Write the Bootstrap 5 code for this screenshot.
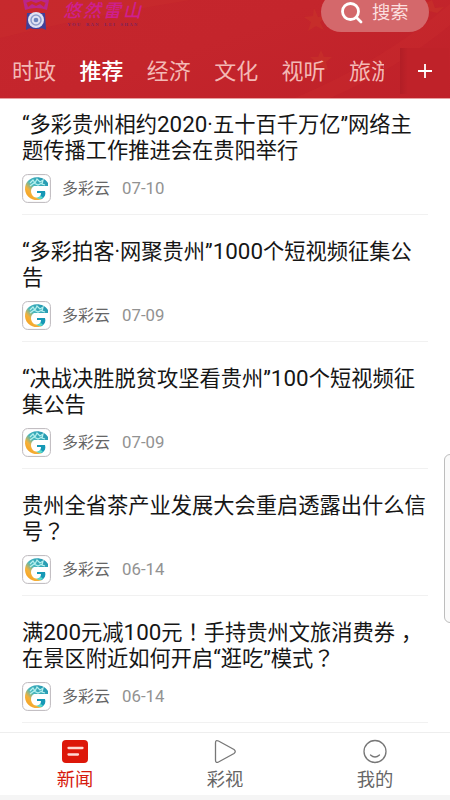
<!DOCTYPE html>
<html lang="zh-CN">
<head>
<meta charset="utf-8">
<meta name="viewport" content="width=device-width, initial-scale=1">
<title>多彩云新闻</title>
<link rel="stylesheet" href="https://cdn.jsdelivr.net/npm/bootstrap@5.3.0/dist/css/bootstrap.min.css">
<style>
body{font-family:Roboto,"Noto Sans CJK SC",sans-serif;color:#161616;width:450px;height:800px}
svg{display:block;flex:none}
.top-area{height:99px;background:linear-gradient(160deg,#c5262d 0%,#c4252c 45%,#bf2129 100%);border-bottom:1px solid #e8a0a0}
.header-art{left:0;top:0}
.brand-row{height:36px;padding-left:22px;padding-right:21px}
.brand-text{width:82px;margin-left:12px;color:#cf1f8e;text-align:center;white-space:nowrap}
.brand-name{font:italic 500 18px/18px "Noto Sans CJK SC",sans-serif;letter-spacing:2px;height:20px}
.brand-sub{font:700 4.5px/6px "Liberation Serif",serif;color:#7a2360;letter-spacing:1.35px;word-spacing:2px;margin-top:2px}
.search-pill{width:108px;height:40px;margin-top:-8px;background:#d4686b;color:#fbdfdf;font-size:18.3px;padding-left:20px;padding-top:1px;gap:9px}
.tab-row{height:62px;padding-left:12px;color:#f3b9b5;font-size:22px;line-height:32px;padding-top:19.5px}
.tab-list{width:372px;gap:23.4px;white-space:nowrap}
.tab-list span{flex:none;width:44px}
.tab-list .chosen{color:#fff;font-weight:500}
.add-tab{width:49px;height:46px;margin-top:-8px;margin-left:16px;background:linear-gradient(90deg,#b21e26,#bf2229 16%)}
.feed{height:633px;padding:0 22px}
.story{height:127px;border-bottom:1px solid #f1f1f1;padding-top:23.5px}
.story:first-child{height:116px;padding-top:12.5px}
.story h2{font-size:21.25px;line-height:26.5px;font-weight:400;white-space:nowrap;height:53px}
.story h2 span{line-height:1}
.num{font-size:22.4px}
.mid{font-family:"Noto Sans CJK TC",sans-serif}
.low-comma{margin-left:6px}
.meta{margin-top:9px;height:29px;font-size:16px;color:#666}
.meta span{position:relative;top:1px}
.meta time{position:relative;top:1px}
.meta .source{margin-left:11px}
.meta time{margin-left:12px;color:#929292;font-size:16.8px}
.bottom-tabs{height:63px;border-top:1px solid #eee;color:#666;font-size:18.3px;line-height:24px}
.bottom-tabs a{color:inherit;padding-top:6px}
.bottom-tabs a.now{color:#d61b0e}
.page-end{height:5px;background:#f5f5f5}
.edge-handle{left:444px;top:454px;width:12px;height:169px;border:1px solid #bdbdbd;border-radius:6px;background:#fafafa}
</style>
</head>
<body class="bg-white overflow-hidden position-relative">
<svg width="0" height="0" class="position-absolute">
<defs>
<linearGradient id="warm" x1="0" y1="1" x2="1" y2="0"><stop offset="0" stop-color="#f59a12"/><stop offset=".3" stop-color="#f5b13a"/><stop offset=".5" stop-color="#49b8be"/><stop offset="1" stop-color="#188fae"/></linearGradient>
<symbol id="cloud" viewBox="0 0 29 29">
<rect x=".6" y=".6" width="27.8" height="27.8" rx="5" fill="#fff" stroke="#bcb8bc"/>
<path d="M26 9C22 2 10 1 5 8C1 14 3 23 11 25.500C14 26.500 18 26 20 25L12 23C8 20 8 14 12 12L26 12Z" fill="url(#warm)"/>
<path d="M8 9l3-3 2 3 2-4 3 3 3-2-1 4 3 1M8 12l4-3 4 2 4-2" fill="none" stroke="#b5f0ee" stroke-width="1.200"/>
<path d="M15 17h8c1 3 0 6-3 8l-4-1c2-1 3-3 3-5h-4z" fill="#1598b6"/>
<path d="M14 24l5-2 2 2-3 1z" fill="#5bdcca"/>
</symbol>
</defs>
</svg>
<header class="top-area position-relative overflow-hidden">
<svg class="header-art position-absolute" width="450" height="98" viewBox="0 0 450 98" aria-hidden="true">
<path d="M0 38Q80 18 190 0H0Z" fill="#cb302e" opacity=".4"/>
<path d="M295 98Q385 60 450 4V25Q395 70 330 98Z" fill="#ce3030" opacity=".3"/>
<path d="M314 8l4 9 9-1-7 6 4 8-8-4-8 5 3-9-7-5 9-1zM321 50l3 7 8 0-6 5 2 8-7-4-7 4 2-8-6-5 8 0zM432 0l3 8 9-1-7 6-8-2-5-7z" fill="#d04329" opacity=".28"/>
</svg>
<div class="brand-row d-flex position-relative">
<svg width="28" height="33" viewBox="0 0 28 33" aria-hidden="true">
<path d="M1 0q4 2 5 7l4-3 4 2 4-2 4 3q1-5 5-7l-2 10q-10-4-22 0z" fill="#bb258b"/>
<path d="M1 0h26l-3 3-5-2-5 2-5-2-5 2z" fill="#bb258b"/>
<path d="M5 13L4 30q4-3 7-1h6q3-2 7 1l-1-17z" fill="#404099"/>
<circle cx="14" cy="20" r="8" fill="#e0e2f2"/><circle cx="14" cy="20" r="5" fill="none" stroke="#8d9cca" stroke-width="1.500"/><circle cx="14" cy="20" r="2.300" fill="#6b83bc"/>
</svg>
<div class="brand-text"><div class="brand-name">悠然雷山</div><div class="brand-sub">YOU RAN LEI SHAN</div></div>
<div class="search-pill rounded-pill d-flex align-items-center ms-auto">
<svg width="22" height="22" viewBox="0 0 22 22" fill="none" stroke="#fff" stroke-width="2.800" stroke-linecap="round"><circle cx="9.500" cy="9.500" r="8"/><path d="M15.500 15.500l4.500 4.500"/></svg>
<span>搜索</span></div>
</div>
<nav class="tab-row d-flex position-relative">
<div class="tab-list d-flex overflow-hidden"><span>时政</span><span class="chosen">推荐</span><span>经济</span><span>文化</span><span>视听</span><span>旅游</span></div>
<div class="add-tab d-flex align-items-center justify-content-center flex-shrink-0"><svg width="14" height="14" viewBox="0 0 14 14" stroke="#fff" stroke-width="1.800"><path d="M7 0v14M0 7h14"/></svg></div>
</nav>
</header>
<main class="feed">
<article class="story"><h2 class="mb-0">“多彩贵州相约<span class="num">2020</span>·五十百千万亿”网络主<br>题传播工作推进会在贵阳举行</h2><div class="meta d-flex align-items-center"><svg width="29" height="29"><use href="#cloud"/></svg><span class="source">多彩云</span><time>07-10</time></div></article>
<article class="story"><h2 class="mb-0">“多彩拍客·网聚贵州”<span class="num">1000</span>个短视频征集公<br>告</h2><div class="meta d-flex align-items-center"><svg width="29" height="29"><use href="#cloud"/></svg><span class="source">多彩云</span><time>07-09</time></div></article>
<article class="story"><h2 class="mb-0">“决战决胜脱贫攻坚看贵州”<span class="num">100</span>个短视频征<br>集公告</h2><div class="meta d-flex align-items-center"><svg width="29" height="29"><use href="#cloud"/></svg><span class="source">多彩云</span><time>07-09</time></div></article>
<article class="story"><h2 class="mb-0">贵州全省茶产业发展大会重启透露出什么信<br>号<span class="mid" lang="zh-TW">？</span></h2><div class="meta d-flex align-items-center"><svg width="29" height="29"><use href="#cloud"/></svg><span class="source">多彩云</span><time>06-14</time></div></article>
<article class="story"><h2 class="mb-0">满<span class="num">200</span>元减<span class="num">100</span>元<span class="mid" lang="zh-TW">！</span>手持贵州文旅消费券<span class="low-comma">，</span><br>在景区附近如何开启“逛吃”模式<span class="mid" lang="zh-TW">？</span></h2><div class="meta d-flex align-items-center"><svg width="29" height="29"><use href="#cloud"/></svg><span class="source">多彩云</span><time>06-14</time></div></article>
</main>
<nav class="bottom-tabs row g-0 text-center bg-white">
<a href="#" class="now col d-flex flex-column align-items-center text-decoration-none"><svg width="28" height="25" viewBox="0 0 28 25"><rect x="1" y="1" width="26" height="23" rx="4" fill="#dd1709"/><path d="M7.500 9h14M7.500 15.500h9.500" stroke="#ffd9d3" stroke-width="2.300" stroke-linecap="round"/></svg><span class="mt-1">新闻</span></a>
<a href="#" class="col d-flex flex-column align-items-center text-decoration-none"><svg width="28" height="25" viewBox="0 0 28 25" fill="none" stroke="#777" stroke-width="1.300"><path d="M4.500 4v17q0 3.500 3 2l15.500-8.500q2.500-2 0-4L7.500 2q-3-1.500-3 2z"/></svg><span class="mt-1">彩视</span></a>
<a href="#" class="col d-flex flex-column align-items-center text-decoration-none"><svg width="28" height="25" viewBox="0 0 28 25" fill="none" stroke="#777" stroke-width="1.300"><circle cx="14" cy="12.500" r="11"/><path d="M9.500 16q4.500 4 9 0" stroke-linecap="round"/></svg><span class="mt-1">我的</span></a>
</nav>
<div class="page-end"></div>
<div class="edge-handle position-absolute"></div>
<script src="https://cdn.jsdelivr.net/npm/bootstrap@5.3.0/dist/js/bootstrap.bundle.min.js"></script>
</body>
</html>
